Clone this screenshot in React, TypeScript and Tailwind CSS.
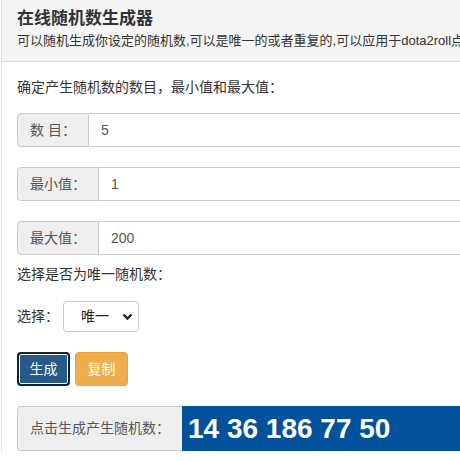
import React from 'react';

const font = { fontFamily: '"Liberation Sans", "Noto Sans CJK SC", sans-serif' };

const InputRow = ({ label, value }: { label: string; value: string }) => (
  <div className="flex h-[34px] text-[14px]">
    <span className="flex items-center px-3 bg-[#eeeeee] border border-[#cccccc] rounded-l-[4px] text-[#555555] whitespace-pre">
      {label}
    </span>
    <div className="flex-1 flex items-center px-3 bg-white border border-l-0 border-[#cccccc] text-[#555555]">
      {value}
    </div>
  </div>
);

export default function App() {
  return (
    <div className="w-[460px] h-[461px] overflow-hidden bg-white pl-px" style={font}>
      <div className="w-[760px] border-l border-[#dddddd] text-[#333333]">
        <div className="bg-[#f5f5f5] border-b border-[#dddddd] pt-[8px] pb-[11px] px-[15px]">
          <h3 className="text-[17px] leading-[22px] font-bold">在线随机数生成器</h3>
          <p className="mt-[2px] text-[13px] leading-[18px] whitespace-nowrap">
            可以随机生成你设定的随机数,可以是唯一的或者重复的,可以应用于dota2roll点,抽奖,分组等
          </p>
        </div>

        <div className="px-[15px] pt-[15px]">
          <p className="text-[14px] leading-[20px]">确定产生随机数的数目，最小值和最大值：</p>

          <div className="mt-[16px] flex flex-col gap-[20px]">
            <InputRow label="数 目：" value="5" />
            <InputRow label="最小值：" value="1" />
            <InputRow label="最大值：" value="200" />
          </div>

          <p className="mt-[9px] text-[14px] leading-[20px]">选择是否为唯一随机数：</p>

          <div className="mt-[17px] flex items-center text-[14px]">
            <span>选择：</span>
            <div className="relative ml-[4px] w-[76px] h-[31px] border border-[#cccccc] rounded-[4px] bg-white flex items-center">
              <span className="ml-[17px] text-[#222222]">唯一</span>
              <svg
                className="absolute right-[5px] top-[10px]"
                width="11"
                height="9"
                viewBox="0 0 11 9"
                fill="none"
                stroke="#222"
                strokeWidth="2.4"
              >
                <path d="M1.5 2.5 L5.5 6.5 L9.5 2.5" />
              </svg>
            </div>
          </div>

          <div className="mt-[20px] flex gap-[5px] text-[14px]">
            <button className="h-[34px] w-[53px] rounded-[4px] bg-[#265a88] text-white border-2 border-[#0f2233] shadow-[inset_0_0_0_1px_#ffffff]">
              生成
            </button>
            <button className="h-[34px] w-[53px] rounded-[4px] bg-[#f0ad4e] text-white border border-[#eea236]">
              复制
            </button>
          </div>

          <div className="mt-[20px] flex h-[45px]">
            <span className="flex items-center px-3 bg-[#eeeeee] border border-[#cccccc] border-r-0 rounded-l-[4px] text-[14px] text-[#555555]">
              点击生成产生随机数：
            </span>
            <div className="flex-1 flex items-center pl-[6px] bg-[#02519b] text-white text-[28px] font-bold">
              14 36 186 77 50
            </div>
          </div>
        </div>
      </div>
    </div>
  );
}
